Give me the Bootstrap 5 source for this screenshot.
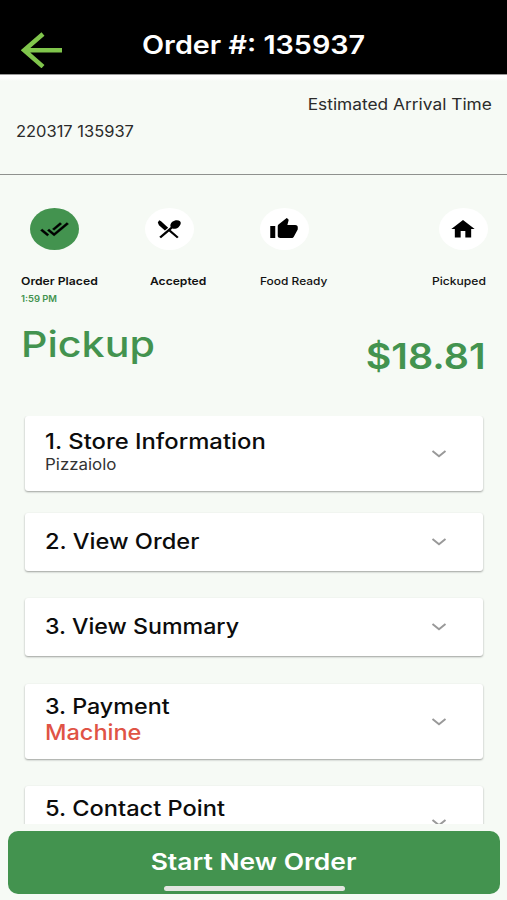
<!DOCTYPE html>
<html lang="en">
<head>
<meta charset="utf-8">
<meta name="viewport" content="width=device-width, initial-scale=1">
<title>Order #: 135937</title>
<link href="https://cdn.jsdelivr.net/npm/bootstrap@5.3.0/dist/css/bootstrap.min.css" rel="stylesheet">
<style>
  :root { --brand: #43934f; --page: #f6faf5; }
  body { font-family: Inter, "Liberation Sans", sans-serif; background: var(--page); color: #111; }
  .screen { height: 900px; }
  .stretch { display: inline-block; white-space: nowrap; transform: scaleX(var(--sx, 1.15)); transform-origin: left center; }
  .stretch.from-end { transform-origin: right center; }
  .stretch.from-mid { transform-origin: center; }
  .t-eta { --sx: 1.117; }
  .t-when { --sx: 1.063; }
  .t-placed { --sx: 1.11; }
  .t-time { --sx: 1.07; }
  .t-acc { --sx: 1.1; }
  .t-food { --sx: 1.085; }
  .t-picked { --sx: 1.1; }
  .t-mode { --sx: 1.145; }
  .t-price { --sx: 1.125; }
  .t-s1 { --sx: 1.135; }
  .t-store { --sx: 1.09; }
  .t-s2 { --sx: 1.125; }
  .t-s3 { --sx: 1.105; }
  .t-s4 { --sx: 1.11; }
  .t-pay { --sx: 1.12; }
  .t-s5 { --sx: 1.125; }
  .t-cta { --sx: 1.175; }

  .topbar { height: 74px; padding-top: 30px; background: #000; }
  .topbar h1 { font-size: 25px; line-height: 31px; font-weight: 600; margin-left: 79.5px; }
  .back { padding: 2px 0 0 21px; width: 62px; height: 38px; }
  .info { height: 101px; border-top: 1px solid #999; border-bottom: 1px solid #8f918e; padding: 20px 15px 0 15.5px;
          background: linear-gradient(#fff 3px, var(--page) 6px); font-size: 15.5px; line-height: 20px; color: #2b2b2b; }
  .info .when { margin-top: 6.5px; }

  .steps-icons { display: grid; grid-template-columns: 114.5px 115px 179px auto; padding: 33px 0 0 30px; height: 75px; }
  .steps-text { display: grid; grid-template-columns: 129px 110px 172.5px auto; padding: 24px 0 0 20.5px; height: 55px; font-size: 11px; line-height: 14px; }
  .disc { width: 49px; height: 42px; border-radius: 50%; background: #fff; }
  .disc.done { background: var(--brand); }
  .disc svg { margin-right: 1px; }
  .time { font-size: 8.8px; line-height: 14px; color: var(--brand); margin-top: 4px; }

  .total { height: 111px; padding: 0 21px 0 21px; color: var(--brand); }
  .total .mode { font-size: 36px; line-height: 42px; margin-top: 17.5px; font-weight: 550; }
  .total .price { font-size: 35px; line-height: 42px; margin-top: 30px; font-weight: 600; }

  .sections { height: 408px; padding: 0 24px 0 25px; }
  .panel { border: 0; border-radius: 3px; background: #fff; box-shadow: 0 1px 2px rgba(0,0,0,.36); padding: 0 35.5px 0 20px; flex-shrink: 0; }
  .panel h2 { font-size: 21px; line-height: 26px; font-weight: 550; color: #0c0c0c; }
  .panel.short { height: 58px; }
  .panel.tall { height: 75px; }
  .panel.after-store { margin-top: 22px; }
  .panel.after-order { margin-top: 27px; }
  .panel.after-summary { margin-top: 28px; }
  .panel.after-pay { margin-top: 27px; }
  .panel .contact { padding-bottom: 29px; }
  .store { font-size: 15.5px; line-height: 19px; color: #333; }
  .pay { font-size: 21px; line-height: 26px; font-weight: 550; color: #e05345; }

  .start { height: 63px; margin: 7px 7px 0 8px; border-radius: 10px; background: var(--brand); color: #fff; }
  .start .cta { font-size: 22.5px; line-height: 28px; margin-top: 16.5px; font-weight: 600; }
  .home-bar { width: 181px; height: 5px; border-radius: 3px; background: #e2e5e0; margin-top: 10.5px; }
</style>
</head>
<body>
<main class="screen d-flex flex-column overflow-hidden">
  <header class="topbar d-flex flex-shrink-0">
    <a class="back" href="#" aria-label="Back">
      <svg class="d-block" width="42" height="36" viewBox="0 0 42 36" fill="none" stroke="#80c54c" stroke-width="4.500"><path d="M41 18.300H4M22 2 3.200 18.300 22 34.600"/></svg>
    </a>
    <h1 class="text-white mb-0"><span class="stretch t-title">Order #: 135937</span></h1>
  </header>

  <section class="info flex-shrink-0">
    <div class="text-end"><span class="stretch from-end t-eta">Estimated Arrival Time</span></div>
    <div class="when"><span class="stretch t-when">220317 135937</span></div>
  </section>

  <section class="flex-shrink-0">
    <div class="steps-icons">
      <div class="disc done d-flex align-items-center justify-content-center">
        <svg width="29" height="24" viewBox="0 0 24 24" preserveAspectRatio="none" stroke="#000" stroke-width=".3"><path d="m18 7-1.410-1.410-6.340 6.340 1.410 1.410zm4.240-1.410L11.660 16.170 7.480 12l-1.410 1.410L11.660 19l12-12zM.41 13.410 6 19l1.410-1.410L1.830 12z"/></svg>
      </div>
      <div class="disc d-flex align-items-center justify-content-center">
        <svg width="28" height="24" viewBox="0 0 24 24" preserveAspectRatio="none"><path d="M3.600 3.200 2.400 5.600 3.400 8.200 8.500 13.600 11.300 10.800 5.200 4.200zM14.880 11.530c1.530.71 3.680.21 5.270-1.380 1.910-1.910 2.600-4.500 1.300-5.900-1.460-1.460-4.690-1.320-6.610.59-1.590 1.590-2.090 3.740-1.380 5.270L3.700 19.870l1.410 1.410L12 14.410l6.880 6.880 1.410-1.410L13.410 13z"/></svg>
      </div>
      <div class="disc d-flex align-items-center justify-content-center">
        <svg width="30" height="24" viewBox="0 0 24 24" preserveAspectRatio="none"><path d="M1 21h4V9H1zm22-11c0-1.100-.9-2-2-2h-6.310l.95-4.570.03-.32c0-.41-.17-.79-.44-1.060L14.170 1 7.590 7.590C7.220 7.950 7 8.450 7 9v10c0 1.100.9 2 2 2h9c.83 0 1.540-.5 1.840-1.220l3.020-7.050c.09-.23.14-.47.14-.73z"/></svg>
      </div>
      <div class="disc d-flex align-items-center justify-content-center">
        <svg width="28" height="24" viewBox="0 0 24 24" preserveAspectRatio="none"><path d="M10 20.500v-6.500h4v6.500h5v-8.500h3L12 3 2 12h3v8.500z"/></svg>
      </div>
    </div>
    <div class="steps-text">
      <div>
        <div class="fw-semibold"><span class="stretch t-placed">Order Placed</span></div>
        <div class="time fw-semibold"><span class="stretch t-time">1:59 PM</span></div>
      </div>
      <div class="fw-semibold"><span class="stretch t-acc">Accepted</span></div>
      <div class="fw-medium"><span class="stretch t-food">Food Ready</span></div>
      <div class="fw-medium"><span class="stretch t-picked">Pickuped</span></div>
    </div>
  </section>

  <section class="total d-flex justify-content-between flex-shrink-0">
    <div class="mode"><span class="stretch t-mode">Pickup</span></div>
    <div class="price"><span class="stretch from-end t-price">$18.81</span></div>
  </section>

  <section class="sections d-flex flex-column overflow-hidden flex-shrink-0">
    <div class="panel tall d-flex justify-content-between align-items-center">
      <div class="mb-1">
        <h2 class="mb-0"><span class="stretch t-s1">1. Store Information</span></h2>
        <div class="store"><span class="stretch t-store">Pizzaiolo</span></div>
      </div>
      <svg width="18" height="10" viewBox="0 0 18 10" fill="none" stroke="#999" stroke-width="2"><path d="m2.500 2 6.500 5.200L15.500 2"/></svg>
    </div>
    <div class="panel short after-store d-flex justify-content-between align-items-center">
      <h2 class="mb-0"><span class="stretch t-s2">2. View Order</span></h2>
      <svg width="18" height="10" viewBox="0 0 18 10" fill="none" stroke="#999" stroke-width="2"><path d="m2.500 2 6.500 5.200L15.500 2"/></svg>
    </div>
    <div class="panel short after-order d-flex justify-content-between align-items-center">
      <h2 class="mb-0"><span class="stretch t-s3">3. View Summary</span></h2>
      <svg width="18" height="10" viewBox="0 0 18 10" fill="none" stroke="#999" stroke-width="2"><path d="m2.500 2 6.500 5.200L15.500 2"/></svg>
    </div>
    <div class="panel tall after-summary d-flex justify-content-between align-items-center">
      <div class="mb-1">
        <h2 class="mb-0"><span class="stretch t-s4">3. Payment</span></h2>
        <div class="pay"><span class="stretch t-pay">Machine</span></div>
      </div>
      <svg width="18" height="10" viewBox="0 0 18 10" fill="none" stroke="#999" stroke-width="2"><path d="m2.500 2 6.500 5.200L15.500 2"/></svg>
    </div>
    <div class="panel tall after-pay d-flex justify-content-between align-items-center">
      <h2 class="contact mb-0"><span class="stretch t-s5">5. Contact Point</span></h2>
      <svg width="18" height="10" viewBox="0 0 18 10" fill="none" stroke="#999" stroke-width="2"><path d="m2.500 1 6.500 5.200L15.500 1"/></svg>
    </div>
  </section>

  <a class="start d-flex flex-column align-items-center text-decoration-none flex-shrink-0" href="#">
    <span class="cta"><span class="stretch from-mid t-cta">Start New Order</span></span>
    <span class="home-bar"></span>
  </a>
</main>
<script src="https://cdn.jsdelivr.net/npm/bootstrap@5.3.0/dist/js/bootstrap.bundle.min.js"></script>
</body>
</html>
